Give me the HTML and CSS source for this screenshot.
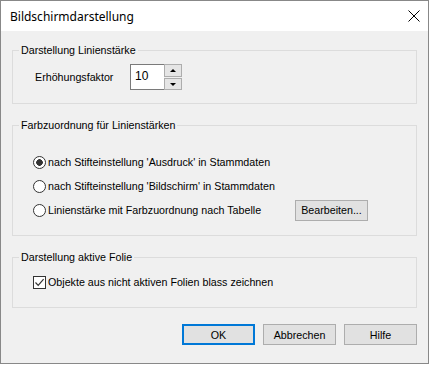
FILE: index.html
```html
<!DOCTYPE html>
<html lang="de">
<head>
  <meta charset="UTF-8">
  <title>Bildschirmdarstellung</title>
  <link rel="stylesheet" href="styles.css">
</head>
<body>
  <div class="dialog">
    <div class="titlebar">
      <span class="title">Bildschirmdarstellung</span>
      <svg class="close" width="12" height="12" viewBox="0 0 12 12">
        <path d="M0.5 0.5 L11.5 11.5 M11.5 0.5 L0.5 11.5" stroke="#000" stroke-width="1" fill="none"/>
      </svg>
    </div>

    <div class="content">
      <fieldset class="group">
        <legend>Darstellung Linienstärke</legend>
        <div class="inner inner-factor">
          <span class="factor-label">Erhöhungsfaktor</span>
          <div class="spin">
            <div class="spin-edit">10</div>
            <div class="spin-btns">
              <div class="spin-btn"><span class="arrow-up"></span></div>
              <div class="spin-btn"><span class="arrow-down"></span></div>
            </div>
          </div>
        </div>
      </fieldset>

      <fieldset class="group">
        <legend>Farbzuordnung für Linienstärken</legend>
        <div class="inner inner-colors">
          <div class="opt"><span class="radio checked"></span>nach Stifteinstellung 'Ausdruck' in Stammdaten</div>
          <div class="opt"><span class="radio"></span>nach Stifteinstellung 'Bildschirm' in Stammdaten</div>
          <div class="opt">
            <span class="opt-wide"><span class="radio"></span>Linienstärke mit Farbzuordnung nach Tabelle</span>
            <span class="btn btn-edit">Bearbeiten...</span>
          </div>
        </div>
      </fieldset>

      <fieldset class="group">
        <legend>Darstellung aktive Folie</legend>
        <div class="inner inner-layer">
          <div class="opt">
            <span class="check">
              <svg width="11" height="11" viewBox="0 0 11 11"><path d="M1.5 5.5 L4.2 8.3 L9.6 2.2" stroke="#333" stroke-width="1.2" fill="none"/></svg>
            </span>Objekte aus nicht aktiven Folien blass zeichnen
          </div>
        </div>
      </fieldset>

      <div class="buttons">
        <span class="btn btn-default">OK</span>
        <span class="btn">Abbrechen</span>
        <span class="btn">Hilfe</span>
      </div>
    </div>
  </div>
</body>
</html>
```

FILE: styles.css
```css
* {
  box-sizing: border-box;
}
body {
  margin: 0;
  background: #fff;
  font-family: "Liberation Sans", Arial, sans-serif;
  font-size: 10.7px;
  color: #000;
}
.dialog {
  width: 429px;
  height: 364px;
  border: 1px solid #888;
  background: #f0f0f0;
}
.titlebar {
  height: 30px;
  background: #fff;
  display: flex;
  align-items: center;
  justify-content: space-between;
  padding: 0 8px 0 9px;
}
.title {
  font-family: "Noto Sans", "Open Sans", sans-serif;
  font-size: 12px;
}
.content {
  padding: 13px 11px 0 11px;
}
.group {
  margin: 0 0 15px 0;
  padding: 0;
  border: 1px solid #dcdcdc;
  min-width: 0;
}
.group legend {
  margin-left: 6px;
  padding: 0 2px;
  line-height: 13px;
}
.inner-factor {
  display: flex;
  align-items: center;
  padding: 7px 0 13px 22px;
}
.factor-label {
  width: 95px;
}
.spin {
  display: flex;
  height: 26px;
}
.spin-edit {
  width: 34px;
  border: 1px solid #7a7a7a;
  border-right: none;
  background: #fff;
  font-size: 12px;
  padding: 4px 0 0 4px;
}
.spin-btns {
  display: flex;
  flex-direction: column;
  justify-content: space-between;
  width: 18px;
  padding: 0;
}
.spin-btn {
  height: 13px;
  border: 1px solid #adadad;
  background: #e5e5e5;
  display: flex;
  align-items: center;
  justify-content: center;
}
.spin-btn + .spin-btn {
  height: 12px;
}
.arrow-up {
  width: 0;
  height: 0;
  border-left: 3px solid transparent;
  border-right: 3px solid transparent;
  border-bottom: 3px solid #000;
}
.arrow-down {
  width: 0;
  height: 0;
  border-left: 3px solid transparent;
  border-right: 3px solid transparent;
  border-top: 3px solid #000;
}
.inner-colors {
  padding: 18px 0 13px 20px;
}
.inner-layer {
  padding: 6px 0 13px 20px;
}
.opt {
  display: flex;
  align-items: center;
  height: 24px;
}
.opt-wide {
  display: flex;
  align-items: center;
  width: 262px;
}
.radio {
  width: 13px;
  height: 13px;
  border: 1px solid #333;
  border-radius: 50%;
  background: #fff;
  margin-right: 2px;
  flex: none;
}
.radio.checked {
  background: radial-gradient(circle, #333 3px, #fff 3.6px);
}
.check {
  width: 13px;
  height: 13px;
  border: 1px solid #333;
  background: #fff;
  margin-right: 2px;
  flex: none;
  display: flex;
}
.btn {
  display: flex;
  align-items: center;
  justify-content: center;
  width: 73px;
  height: 21px;
  border: 1px solid #adadad;
  background: #e1e1e1;
}
.btn-default {
  border: 2px solid #0078d7;
}
.buttons {
  display: flex;
  justify-content: flex-end;
  gap: 8px;
  margin-top: 16px;
}
```
